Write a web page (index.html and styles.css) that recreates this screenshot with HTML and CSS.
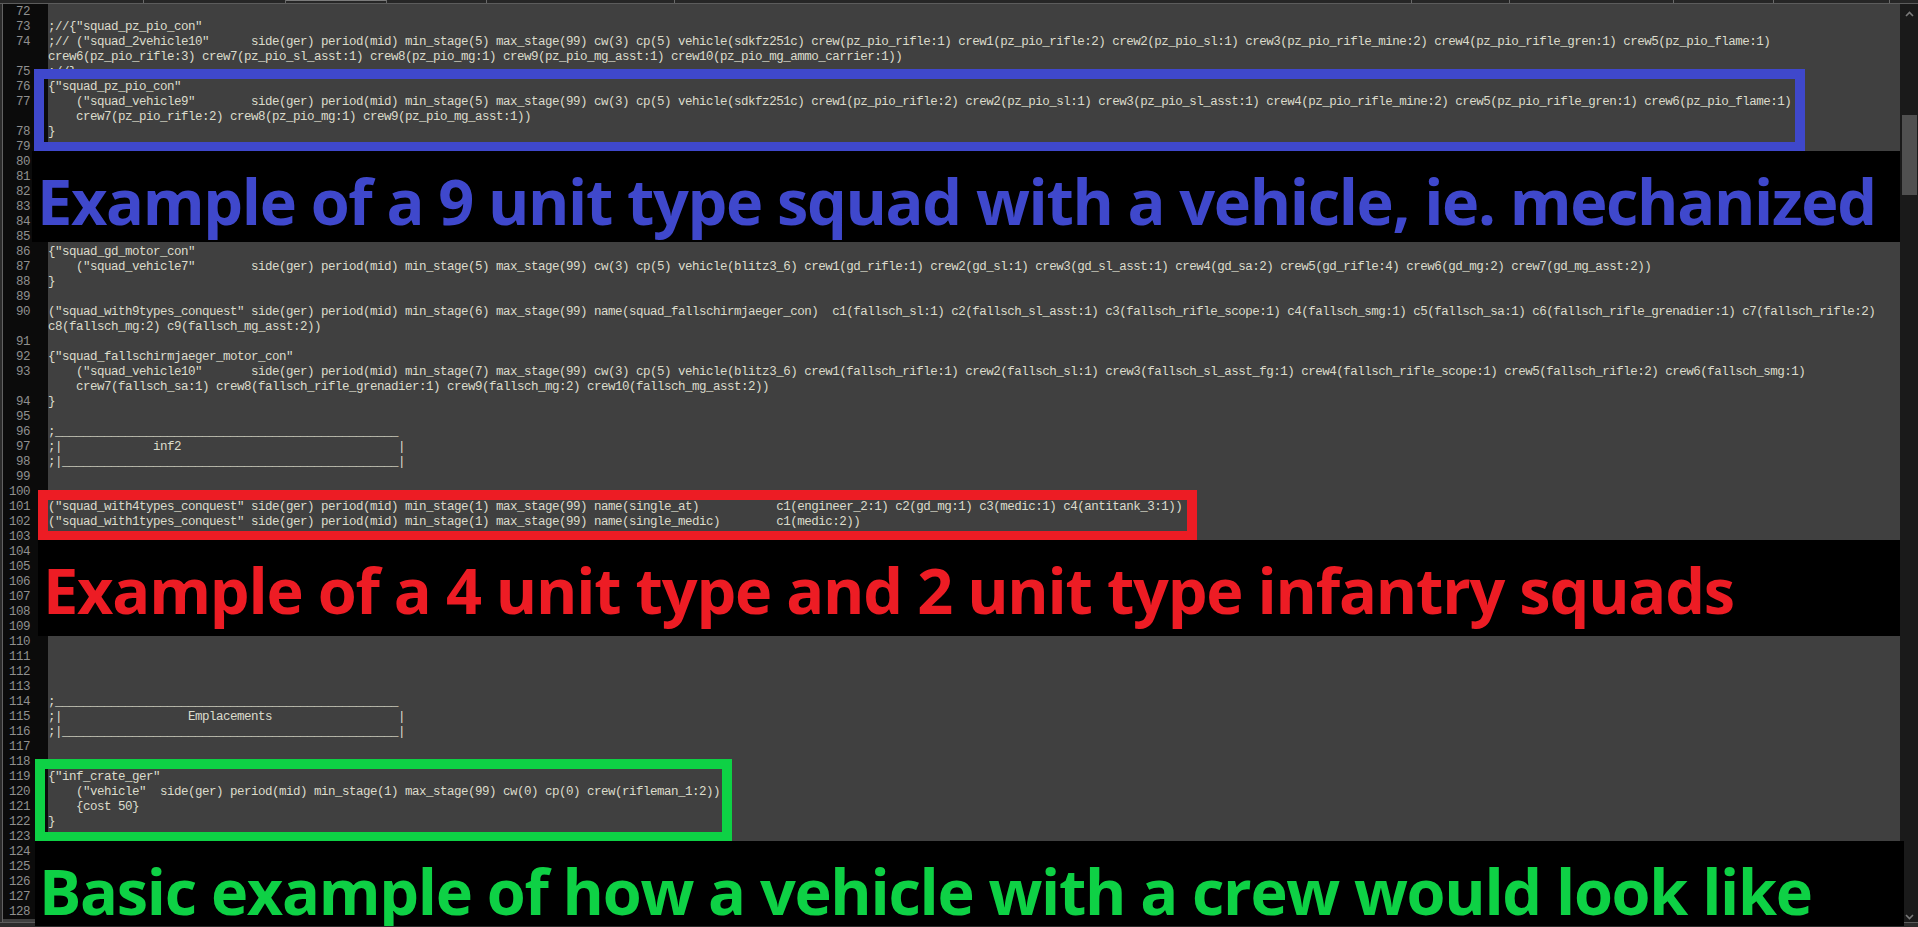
FILE: index.html
```html
<!DOCTYPE html>
<html lang="en">
<head>
<meta charset="utf-8">
<title>squad templates</title>
<link rel="stylesheet" href="styles.css">
</head>
<body>
<div class="app">
  <div class="tabs">
    <span class="tab t1"></span><span class="tab t2"></span><span class="tab t3 active"></span><span class="tab t4"></span><span class="tab t5"></span><span class="tab t6"></span><span class="tab t7"></span><span class="tab t8"></span><span class="tab t9"></span><span class="tab t10"></span>
  </div>
  <div class="main">
    <div class="editor">
<div class="ln"><span class="n">72</span><code></code></div>
<div class="ln"><span class="n">73</span><code>;//{"squad_pz_pio_con"</code></div>
<div class="ln"><span class="n">74</span><code>;// ("squad_2vehicle10"      side(ger) period(mid) min_stage(5) max_stage(99) cw(3) cp(5) vehicle(sdkfz251c) crew(pz_pio_rifle:1) crew1(pz_pio_rifle:2) crew2(pz_pio_sl:1) crew3(pz_pio_rifle_mine:2) crew4(pz_pio_rifle_gren:1) crew5(pz_pio_flame:1)</code></div>
<div class="ln"><span class="n"></span><code>crew6(pz_pio_rifle:3) crew7(pz_pio_sl_asst:1) crew8(pz_pio_mg:1) crew9(pz_pio_mg_asst:1) crew10(pz_pio_mg_ammo_carrier:1))</code></div>
<div class="ln"><span class="n">75</span><code>;//}</code></div>
<div class="ln"><span class="n">76</span><code>{"squad_pz_pio_con"</code></div>
<div class="ln"><span class="n">77</span><code>    ("squad_vehicle9"        side(ger) period(mid) min_stage(5) max_stage(99) cw(3) cp(5) vehicle(sdkfz251c) crew1(pz_pio_rifle:2) crew2(pz_pio_sl:1) crew3(pz_pio_sl_asst:1) crew4(pz_pio_rifle_mine:2) crew5(pz_pio_rifle_gren:1) crew6(pz_pio_flame:1)</code></div>
<div class="ln"><span class="n"></span><code>    crew7(pz_pio_rifle:2) crew8(pz_pio_mg:1) crew9(pz_pio_mg_asst:1))</code></div>
<div class="ln"><span class="n">78</span><code>}</code></div>
<div class="ln"><span class="n">79</span><code></code></div>
<div class="ln"><span class="n">80</span><code></code></div>
<div class="ln"><span class="n">81</span><code></code></div>
<div class="ln"><span class="n">82</span><code></code></div>
<div class="ln"><span class="n">83</span><code></code></div>
<div class="ln"><span class="n">84</span><code></code></div>
<div class="ln"><span class="n">85</span><code></code></div>
<div class="ln"><span class="n">86</span><code>{"squad_gd_motor_con"</code></div>
<div class="ln"><span class="n">87</span><code>    ("squad_vehicle7"        side(ger) period(mid) min_stage(5) max_stage(99) cw(3) cp(5) vehicle(blitz3_6) crew1(gd_rifle:1) crew2(gd_sl:1) crew3(gd_sl_asst:1) crew4(gd_sa:2) crew5(gd_rifle:4) crew6(gd_mg:2) crew7(gd_mg_asst:2))</code></div>
<div class="ln"><span class="n">88</span><code>}</code></div>
<div class="ln"><span class="n">89</span><code></code></div>
<div class="ln"><span class="n">90</span><code>("squad_with9types_conquest" side(ger) period(mid) min_stage(6) max_stage(99) name(squad_fallschirmjaeger_con)  c1(fallsch_sl:1) c2(fallsch_sl_asst:1) c3(fallsch_rifle_scope:1) c4(fallsch_smg:1) c5(fallsch_sa:1) c6(fallsch_rifle_grenadier:1) c7(fallsch_rifle:2)</code></div>
<div class="ln"><span class="n"></span><code>c8(fallsch_mg:2) c9(fallsch_mg_asst:2))</code></div>
<div class="ln"><span class="n">91</span><code></code></div>
<div class="ln"><span class="n">92</span><code>{"squad_fallschirmjaeger_motor_con"</code></div>
<div class="ln"><span class="n">93</span><code>    ("squad_vehicle10"       side(ger) period(mid) min_stage(7) max_stage(99) cw(3) cp(5) vehicle(blitz3_6) crew1(fallsch_rifle:1) crew2(fallsch_sl:1) crew3(fallsch_sl_asst_fg:1) crew4(fallsch_rifle_scope:1) crew5(fallsch_rifle:2) crew6(fallsch_smg:1)</code></div>
<div class="ln"><span class="n"></span><code>    crew7(fallsch_sa:1) crew8(fallsch_rifle_grenadier:1) crew9(fallsch_mg:2) crew10(fallsch_mg_asst:2))</code></div>
<div class="ln"><span class="n">94</span><code>}</code></div>
<div class="ln"><span class="n">95</span><code></code></div>
<div class="ln"><span class="n">96</span><code>;_________________________________________________</code></div>
<div class="ln"><span class="n">97</span><code>;|             inf2                               |</code></div>
<div class="ln"><span class="n">98</span><code>;|________________________________________________|</code></div>
<div class="ln"><span class="n">99</span><code></code></div>
<div class="ln"><span class="n">100</span><code></code></div>
<div class="ln"><span class="n">101</span><code>("squad_with4types_conquest" side(ger) period(mid) min_stage(1) max_stage(99) name(single_at)           c1(engineer_2:1) c2(gd_mg:1) c3(medic:1) c4(antitank_3:1))</code></div>
<div class="ln"><span class="n">102</span><code>("squad_with1types_conquest" side(ger) period(mid) min_stage(1) max_stage(99) name(single_medic)        c1(medic:2))</code></div>
<div class="ln"><span class="n">103</span><code></code></div>
<div class="ln"><span class="n">104</span><code></code></div>
<div class="ln"><span class="n">105</span><code></code></div>
<div class="ln"><span class="n">106</span><code></code></div>
<div class="ln"><span class="n">107</span><code></code></div>
<div class="ln"><span class="n">108</span><code></code></div>
<div class="ln"><span class="n">109</span><code></code></div>
<div class="ln"><span class="n">110</span><code></code></div>
<div class="ln"><span class="n">111</span><code></code></div>
<div class="ln"><span class="n">112</span><code></code></div>
<div class="ln"><span class="n">113</span><code></code></div>
<div class="ln"><span class="n">114</span><code>;_________________________________________________</code></div>
<div class="ln"><span class="n">115</span><code>;|                  Emplacements                  |</code></div>
<div class="ln"><span class="n">116</span><code>;|________________________________________________|</code></div>
<div class="ln"><span class="n">117</span><code></code></div>
<div class="ln"><span class="n">118</span><code></code></div>
<div class="ln"><span class="n">119</span><code>{"inf_crate_ger"</code></div>
<div class="ln"><span class="n">120</span><code>    ("vehicle"  side(ger) period(mid) min_stage(1) max_stage(99) cw(0) cp(0) crew(rifleman_1:2))</code></div>
<div class="ln"><span class="n">121</span><code>    {cost 50}</code></div>
<div class="ln"><span class="n">122</span><code>}</code></div>
<div class="ln"><span class="n">123</span><code></code></div>
<div class="ln"><span class="n">124</span><code></code></div>
<div class="ln"><span class="n">125</span><code></code></div>
<div class="ln"><span class="n">126</span><code></code></div>
<div class="ln"><span class="n">127</span><code></code></div>
<div class="ln"><span class="n">128</span><code></code></div>
    </div>
    <div class="scrollbar">
      <svg class="arrow up" width="9" height="6" viewBox="0 0 9 6"><path d="M1 5 L4.5 1.5 L8 5" fill="none" stroke="#7a7a7a" stroke-width="1.6"/></svg>
      <div class="thumb"></div>
      <svg class="arrow down" width="9" height="6" viewBox="0 0 9 6"><path d="M1 1 L4.5 4.5 L8 1" fill="none" stroke="#7a7a7a" stroke-width="1.6"/></svg>
    </div>
  </div>
  <div class="frame blue-frame"></div>
  <div class="band band-blue"><h2>Example of a 9 unit type squad with a vehicle, ie. mechanized</h2></div>
  <div class="frame red-frame"></div>
  <div class="band band-red"><h2>Example of a 4 unit type and 2 unit type infantry squads</h2></div>
  <div class="frame green-frame"></div>
  <div class="band band-green"><h2>Basic example of how a vehicle with a crew would look like</h2></div>
</div>
</body>
</html>
```
FILE: styles.css
```css
* { box-sizing: border-box; }
html, body { margin: 0; height: 100%; background: #2b2b2b; overflow: hidden; }

.app {
  position: relative;
  width: 1918px;
  height: 927px;
  display: flex;
  flex-direction: column;
  overflow: hidden;
  padding-bottom: 4px;
}

.tabs {
  display: flex;
  height: 4px;
  flex: none;
  background: #262626;
  border-bottom: 1px solid #5c5c5c;
}
.tab { height: 3px; border-right: 1px solid #6a6a6a; flex: none; }
.t1 { width: 144px; }
.t2 { width: 142px; }
.t3 { width: 101px; }
.t4 { width: 100px; }
.t5 { width: 188px; }
.t6 { width: 737px; }
.t7 { width: 98px; }
.t8 { width: 164px; }
.t9 { width: 100px; }
.t10 { width: 116px; }
.active { border-top: 1px solid #7a7a7a; }

.main {
  flex: 1;
  display: flex;
  min-height: 0;
  padding-left: 2px;
  border-bottom: 1px solid #5c5c5c;
}

.editor {
  flex: 1;
  min-width: 0;
  background: #404040;
  border-left: 1px solid #626262;
  overflow: hidden;
}

.ln { display: flex; height: 15px; }
.n {
  flex: none;
  width: 45px;
  padding: 1px 18px 0 0;
  text-align: right;
  background: #0b0b0b;
  color: #8f8f8f;
  font: 12.5px/15px "Liberation Mono", monospace;
  letter-spacing: -0.5px;
}
code {
  flex: 1;
  padding-top: 1px;
  white-space: pre;
  color: #dcdccc;
  font: 12.5px/15px "Liberation Mono", monospace;
  letter-spacing: -0.5px;
}

.scrollbar {
  flex: none;
  width: 18px;
  background: #1a1a1a;
  display: flex;
  flex-direction: column;
  align-items: center;
}
.arrow { flex: none; }
.up { margin-top: 7px; }
.thumb {
  flex: none;
  width: 15px;
  height: 80px;
  margin-top: 98px;
  background: #505050;
}
.down { margin-top: auto; margin-bottom: 2px; }

.frame { position: absolute; border: 10px solid; border-bottom-width: 9px; }
.blue-frame { left: 34px; top: 69px; width: 1771px; height: 82px; border-color: #3f48cc; }
.red-frame { left: 38px; top: 490px; width: 1159px; height: 50px; border-color: #ed1c24; }
.green-frame { left: 35px; top: 759px; width: 697px; height: 82px; border-color: #0ed145; }

.band { position: absolute; background: #000; overflow: hidden; padding-top: 20px; }
.band h2 {
  margin: 0;
  font: 700 63px/60px "Open Sans", sans-serif;
  white-space: nowrap;
}
.band-blue { left: 32px; top: 151px; width: 1868px; height: 91px; color: #3f48cc; padding-left: 5px; letter-spacing: -1.33px; }
.band-red { left: 38px; top: 540px; width: 1862px; height: 96px; color: #ed1c24; padding-left: 5px; letter-spacing: -1.2px; }
.band-green { left: 35px; top: 841px; width: 1869px; height: 85px; color: #0ed145; padding-left: 4px; letter-spacing: -1.3px; }
```
